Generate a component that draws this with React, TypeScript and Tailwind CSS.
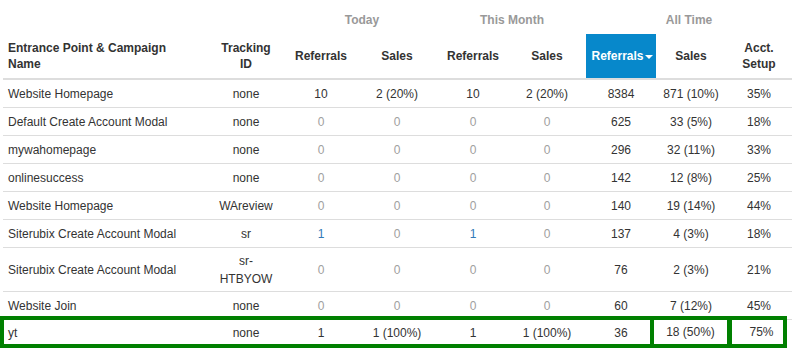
import React from 'react';

type Cell = { v: string; tone?: 'muted' | 'link' };

interface Row {
  name: string;
  tracking: React.ReactNode;
  cells: Cell[];
  tall?: boolean;
}

const z: Cell = { v: '0', tone: 'muted' };

const rows: Row[] = [
  { name: 'Website Homepage', tracking: 'none', cells: [{ v: '10' }, { v: '2 (20%)' }, { v: '10' }, { v: '2 (20%)' }, { v: '8384' }, { v: '871 (10%)' }, { v: '35%' }] },
  { name: 'Default Create Account Modal', tracking: 'none', cells: [z, z, z, z, { v: '625' }, { v: '33 (5%)' }, { v: '18%' }] },
  { name: 'mywahomepage', tracking: 'none', cells: [z, z, z, z, { v: '296' }, { v: '32 (11%)' }, { v: '33%' }] },
  { name: 'onlinesuccess', tracking: 'none', cells: [z, z, z, z, { v: '142' }, { v: '12 (8%)' }, { v: '25%' }] },
  { name: 'Website Homepage', tracking: 'WAreview', cells: [z, z, z, z, { v: '140' }, { v: '19 (14%)' }, { v: '44%' }] },
  { name: 'Siterubix Create Account Modal', tracking: 'sr', cells: [{ v: '1', tone: 'link' }, z, { v: '1', tone: 'link' }, z, { v: '137' }, { v: '4 (3%)' }, { v: '18%' }] },
  { name: 'Siterubix Create Account Modal', tracking: <>sr-<br />HTBYOW</>, tall: true, cells: [z, z, z, z, { v: '76' }, { v: '2 (3%)' }, { v: '21%' }] },
  { name: 'Website Join', tracking: 'none', cells: [z, z, z, z, { v: '60' }, { v: '7 (12%)' }, { v: '45%' }] },
];

const cols = 'grid grid-cols-[203px_80px_70px_82px_70px_78px_70px_70px_66px]';

const toneClass = (c: Cell) =>
  c.tone === 'muted' ? 'text-[#a0a0a0]' : c.tone === 'link' ? 'text-[#337ab7]' : 'text-[#333]';

export default function App() {
  return (
    <div
      className="w-[792px] h-[348px] bg-white overflow-hidden text-[12px] text-[#333]"
      style={{ fontFamily: '"Liberation Sans", Arial, sans-serif' }}
    >
      {/* group titles */}
      <div className={`${cols} ml-[3px] w-[789px] h-[34px] items-end pb-[6px] font-bold text-[#999] leading-4`}>
        <div className="col-span-2" />
        <div className="col-span-2 text-center">Today</div>
        <div className="col-span-2 text-center">This Month</div>
        <div className="col-span-3 text-center">All Time</div>
      </div>

      {/* column headers */}
      <div className={`${cols} ml-[3px] w-[789px] h-[46px] border-b-2 border-[#ddd] font-bold leading-4`}>
        <div className="flex items-center pl-[5px]">Entrance Point &amp; Campaign<br />Name</div>
        <div className="flex items-center justify-center text-center">Tracking<br />ID</div>
        <div className="flex items-center justify-center">Referrals</div>
        <div className="flex items-center justify-center">Sales</div>
        <div className="flex items-center justify-center">Referrals</div>
        <div className="flex items-center justify-center">Sales</div>
        <div className="flex items-center justify-center bg-[#0788cb] text-white pl-[2px]">
          Referrals
          <span className="ml-px mt-[2px] w-0 h-0 border-l-[4px] border-r-[4px] border-t-[4px] border-l-transparent border-r-transparent border-t-white" />
        </div>
        <div className="flex items-center justify-center">Sales</div>
        <div className="flex items-center justify-center text-center">Acct.<br />Setup</div>
      </div>

      {/* data rows */}
      {rows.map((r, i) => (
        <div
          key={i}
          className={`${cols} ml-[3px] w-[789px] ${r.tall ? 'h-[44px]' : 'h-[28px]'} border-b border-[#ddd] items-center leading-[18px]`}
        >
          <div className="pl-[5px] whitespace-nowrap">{r.name}</div>
          <div className="text-center">{r.tracking}</div>
          {r.cells.map((c, j) => (
            <div key={j} className={`text-center ${toneClass(c)}`}>{c.v}</div>
          ))}
        </div>
      ))}

      {/* highlighted row */}
      <div className="-mt-[4px] w-[787px] h-[32px] pt-[2px] border-4 border-[#008000] grid grid-cols-[202px_80px_70px_82px_70px_78px_64px_77px_56px] leading-[18px]">
        <div className="flex items-center pl-[4px]">yt</div>
        <div className="flex items-center justify-center">none</div>
        <div className="flex items-center justify-center">1</div>
        <div className="flex items-center justify-center">1 (100%)</div>
        <div className="flex items-center justify-center">1</div>
        <div className="flex items-center justify-center">1 (100%)</div>
        <div className="flex items-center justify-center pl-[6px]">36</div>
        <div className="flex items-center justify-center border-l-4 border-[#008000] -mt-[2px]">18 (50%)</div>
        <div className="flex items-center justify-center border-l-[5px] border-[#008000] pl-[8px] -mt-[2px]">75%</div>
      </div>
    </div>
  );
}
